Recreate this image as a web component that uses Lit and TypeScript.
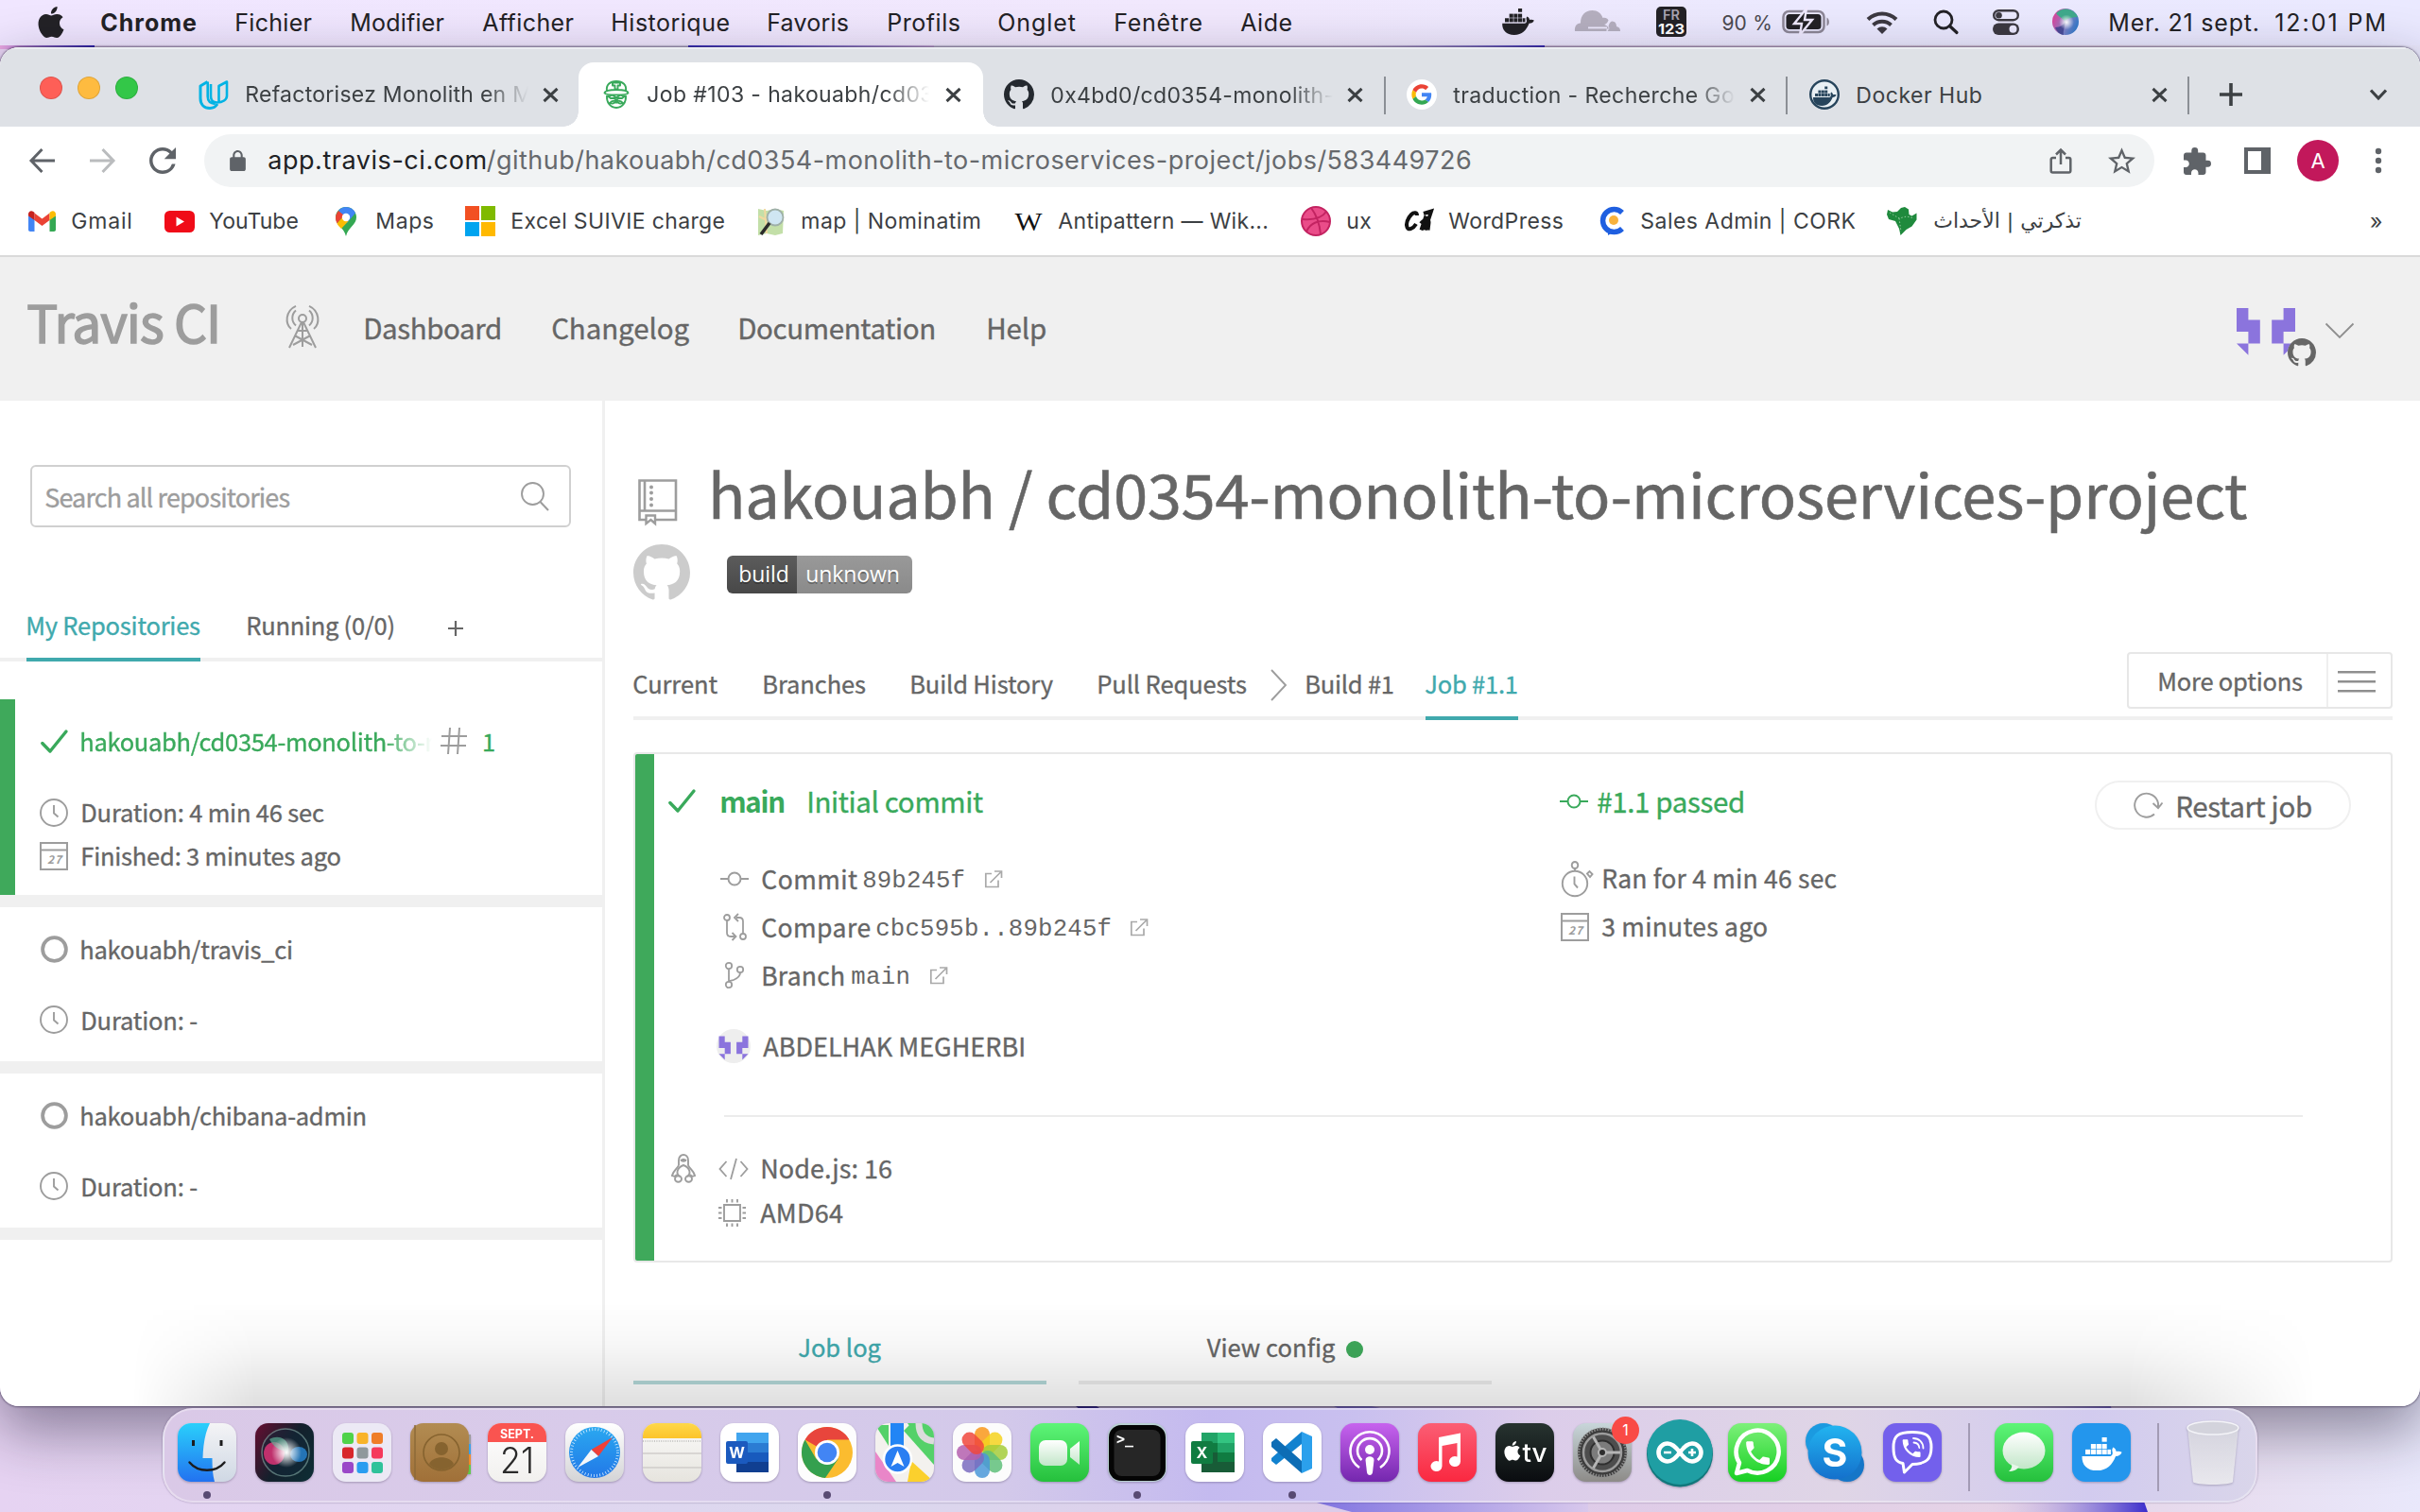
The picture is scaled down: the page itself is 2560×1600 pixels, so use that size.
import { LitElement, html, svg, css, unsafeCSS } from "lit";
import { customElement, property } from "lit/decorators.js";

/* Grid tracks whose items begin at the given x offsets. */
const track = (...xs: number[]) => {
  const steps = xs.slice(1).map((x, i) => `${x - xs[i]}px`).join(" ");
  return unsafeCSS(
    `display:grid;align-items:center;box-sizing:border-box;padding-left:${xs[0]}px;grid-template-columns:${steps} 1fr;`
  );
};

const ico = (w: number, h: number, box: string, body: unknown) =>
  html`<svg class="ico" width=${w} height=${h} viewBox=${box} fill="none" preserveAspectRatio="xMidYMid meet">${body}</svg>`;

const base = css`
  :host { display: block; }
  * { box-sizing: border-box; }
  svg { display: block; flex: none; overflow: visible; }
`;

/* A label tracked so that it fills a given width. */
@customElement("fit-text")
class FitText extends LitElement {
  static styles = css`
    :host { display: inline-block; white-space: pre; width: max-content; margin-left: -0.03em; }
    span { display: inline-block; white-space: pre; }
  `;
  @property({ type: Number }) w = 0;
  render() { return html`<span><slot></slot></span>`; }
  firstUpdated() {
    const span = this.renderRoot.querySelector("span") as HTMLElement;
    const n = (this.textContent ?? "").length;
    if (!this.w || n < 2) return;
    const size = parseFloat(getComputedStyle(this).fontSize);
    const natural = span.getBoundingClientRect().width;
    span.style.letterSpacing = `${((this.w + size * 0.07 - natural) / (n - 1)).toFixed(3)}px`;
  }
}
const t = (text: string, w: number) => html`<fit-text .w=${w}>${text}</fit-text>`;

const GH = "M8 0C3.58 0 0 3.58 0 8c0 3.54 2.29 6.53 5.47 7.59.4.07.55-.17.55-.38 0-.19-.01-.82-.01-1.49-2.01.37-2.53-.49-2.69-.94-.09-.23-.48-.94-.82-1.13-.28-.15-.68-.52-.01-.53.63-.01 1.08.58 1.23.82.72 1.21 1.87.87 2.33.66.07-.52.28-.87.51-1.07-1.78-.2-3.64-.89-3.64-3.95 0-.87.31-1.59.82-2.15-.08-.2-.36-1.02.08-2.12 0 0 .67-.21 2.2.82.64-.18 1.32-.27 2-.27.68 0 1.36.09 2 .27 1.53-1.04 2.2-.82 2.2-.82.44 1.1.16 1.92.08 2.12.51.56.82 1.27.82 2.15 0 3.07-1.87 3.75-3.65 3.95.29.25.54.73.54 1.48 0 1.07-.01 1.93-.01 2.2 0 .21.15.46.55.38A8.013 8.013 0 0016 8c0-4.42-3.58-8-8-8z";
const APPLE = "M12.152 6.896c-.948 0-2.415-1.078-3.96-1.04-2.04.027-3.91 1.183-4.961 3.014-2.117 3.675-.546 9.103 1.519 12.09 1.013 1.454 2.208 3.09 3.792 3.039 1.52-.065 2.09-.987 3.935-.987 1.831 0 2.35.987 3.96.948 1.637-.026 2.676-1.48 3.676-2.948 1.156-1.688 1.636-3.325 1.662-3.415-.039-.013-3.182-1.221-3.22-4.857-.026-3.04 2.48-4.494 2.597-4.559-1.429-2.09-3.623-2.324-4.39-2.376-2-.156-3.675 1.09-4.61 1.09zM15.53 3.83c.843-1.012 1.4-2.427 1.245-3.83-1.207.052-2.662.805-3.532 1.818-.78.896-1.454 2.338-1.273 3.714 1.338.104 2.715-.688 3.559-1.701";
const PHONE = "M6.62 10.79c1.44 2.83 3.76 5.14 6.59 6.59l2.2-2.2c.27-.27.67-.36 1.02-.24 1.12.37 2.33.57 3.57.57.55 0 1 .45 1 1V20c0 .55-.45 1-1 1-9.39 0-17-7.61-17-17 0-.55.45-1 1-1h3.5c.55 0 1 .45 1 1 0 1.25.2 2.45.57 3.57.11.35.03.74-.25 1.02l-2.2 2.2z";

/* Container-ship whale on a 36 x 30 canvas. */
const whale = (fill: string) => svg`
  <g fill=${fill}>
    <rect x="3" y="11" width="4.4" height="4.4"/><rect x="8" y="11" width="4.4" height="4.4"/><rect x="13" y="11" width="4.4" height="4.4"/><rect x="18" y="11" width="4.4" height="4.4"/>
    <rect x="8" y="6" width="4.4" height="4.4"/><rect x="13" y="6" width="4.4" height="4.4"/><rect x="18" y="0" width="4.4" height="4"/>
    <rect x="18" y="6" width="4.4" height="4.4"/><rect x="23" y="11" width="3" height="4.4"/>
    <path d="M0 17h25.5c2-.6 2.6-2.5 1.8-4.700-.3-1.300.2-2.600 1-3.300 1.600.9 2.500 2.300 2.600 3.900 1.600-.4 3.500-.3 5.100.5-.8 2.300-2.700 3.500-5.600 3.600C27.500 24.500 22.500 30 13.500 30 4.500 30-.3 25 0 17z"/>
  </g>`;

/* ------------------------------------------------------------------ menu bar */
@customElement("mac-menubar")
class MacMenubar extends LitElement {
  static styles = [base, css`
    .bar { height: 48px; width: 2560px; color: #232226; font: 25px/46px Inter, "Liberation Sans", sans-serif;
      background: linear-gradient(90deg, #f0e6ff 0%, #f1e8fd 50%, #ebe9fe 75%, #eae9ff 100%);
      ${track(40, 107, 249, 371, 511, 647, 812, 939, 1056, 1179, 1313, 1588, 1666, 1752, 1822, 1885, 1974, 2045, 2108, 2171, 2231, 2407)} }
    .bold { font-weight: 700; }
    .pct { font-size: 21px; color: #4b4950; padding-top: 1px; }
    .ico { align-self: center; margin-top: -2px; }
  `];
  render() {
    return html`<div class="bar">
      ${ico(28, 33, "2.500 0 19 24", svg`<path fill="#232226" d=${APPLE} />`)}
      <div class="bold">${t("Chrome", 100)}</div>
      <div>${t("Fichier", 80)}</div><div>${t("Modifier", 98)}</div><div>${t("Afficher", 95)}</div>
      <div>${t("Historique", 124)}</div><div>${t("Favoris", 85)}</div><div>${t("Profils", 76)}</div>
      <div>${t("Onglet", 81)}</div><div>${t("Fenêtre", 92)}</div><div>${t("Aide", 53)}</div>
      ${ico(36, 28, "0 0 36 30", whale("#232226"))}
      ${ico(48, 24, "0 0 48 24", svg`<path fill="#b5afbf" d="M0 22c-.5-5 1.500-8 6-8.500C6 5 11 0 18.500 0 24 0 28 3 29.500 8c3-.5 5 .5 6 2.500-1.500 4-4.500 4.500-4.500 4.500s4 1 5 4.500H14v2.500z M35.500 17c.5-3 2-5 3.500-5.500 4 0 5 3 5 5.500 3 .5 4 2.500 4 5H34.500l2-3z"/><path d="M14 18.300h20" stroke="#eeebfe" stroke-width="1.600"/><path fill="#b5afbf" d="M0 19.500h33.500V22H0z"/>`)}
      ${ico(32, 32, "0 0 32 32", svg`<rect width="32" height="32" rx="5" fill="#232226"/><text x="16" y="14" text-anchor="middle" font-family="Inter" font-weight="600" font-size="14.500" fill="#a9a4b2">FR</text><text x="16" y="28.800" text-anchor="middle" font-family="Inter" font-weight="700" font-size="15" textLength="28" lengthAdjust="spacingAndGlyphs" fill="#fff">123</text>`)}
      <div class="pct">${t("90 %", 52)}</div>
      ${ico(52, 26, "0 0 52 26", svg`<rect x="1.500" y="2" width="43" height="22" rx="6" stroke="#8d8797" stroke-width="2.500"/><path d="M47.500 8.500c2.800 1 3.500 8 0 9z" fill="#8d8797"/><rect x="4.500" y="5" width="37" height="16" rx="3.500" fill="#232226"/><path d="M26 -1L13 15h8l-2 12 13-16h-8z" fill="#232226" stroke="#efe9fd" stroke-width="2.400"/>`)}
      ${ico(34, 25, "0 0 34 25", svg`<g stroke="#3c3941" stroke-width="4"><path d="M2 9.500a21.500 21.500 0 0 1 30 0"/><path d="M7.500 15.500a13.800 13.800 0 0 1 19 0"/></g><path d="M11.500 19.500a8 8 0 0 1 11 0L17 25z" fill="#3c3941"/>`)}
      ${ico(27, 26, "0 0 27 26", svg`<circle cx="11" cy="11" r="9" stroke="#232226" stroke-width="2.800"/><path d="M17.500 17.500l7.500 7" stroke="#232226" stroke-width="3.200" stroke-linecap="round"/>`)}
      ${ico(28, 27, "0 0 28 27", svg`<rect x="1.200" y="1.200" width="25.600" height="10" rx="5" stroke="#3c3941" stroke-width="2.400"/><circle cx="6.500" cy="6.200" r="3.300" fill="#3c3941"/><rect y="14.500" width="28" height="12.500" rx="6.200" fill="#3c3941"/><circle cx="21.500" cy="20.700" r="4" fill="#ece9fe"/>`)}
      ${ico(28, 28, "0 0 28 28", svg`<defs><linearGradient id="sb" x1="0" y1=".3" x2="1" y2=".7"><stop offset="0" stop-color="#e0409a"/><stop offset=".5" stop-color="#8a83c8"/><stop offset="1" stop-color="#2a78c8"/></linearGradient><radialGradient id="sg"><stop offset="0" stop-color="#fff"/><stop offset="1" stop-color="#fff" stop-opacity="0"/></radialGradient></defs><circle cx="14" cy="14" r="14" fill="url(#sb)"/><path d="M4 5a14 14 0 0 1 23 4c-5 0-10 1-14 4C9 9 6 8 4 5z" fill="#3fa98c"/><path d="M3 20c5 0 9-3 11-6-1 6-3 11-2 14-4-.5-7-3-9-8z" fill="#3a3f8c" opacity=".8"/><circle cx="15" cy="14.500" r="8" fill="url(#sg)"/>`)}
      <div>${t("Mer. 21 sept.", 158)}</div><div>${t("12:01 PM", 116)}</div>
    </div>`;
  }
}

/* -------------------------------------------------------------- browser frame */
const closeX = ico(17, 15, "0 0 17 15", svg`<path d="M1.500 .8l14 13.400M15.500 .8l-14 13.400" stroke="#3c4043" stroke-width="3"/>`);

@customElement("browser-chrome")
class BrowserChrome extends LitElement {
  static styles = [base, css`
    .strip { height: 84px; background: #dee1e6; box-shadow: inset 0 2px #eceef2; position: relative; color: #3c4043;
      font: 23px/36px Inter, "Liberation Sans", sans-serif; display: flex; padding-top: 16px; }
    .lights { width: 194px; display: flex; gap: 16px; padding: 15px 0 0 42px; }
    .light { width: 24px; height: 24px; border-radius: 50%; border: 1px solid rgba(0,0,0,.12); }
    .red { background: #fe5f57; } .amber { background: #febb40; } .green { background: #33c748; }
    .tab { height: 68px; display: flex; align-items: center; position: relative; padding-bottom: 0; }
    .t1 { width: 418px; padding-left: 16px; } .t2 { width: 428px; padding-left: 26px; background: #fff; border-radius: 16px 16px 0 0; }
    .t3 { width: 426px; padding-left: 22px; border-right: 2px solid #8b8f95; }
    .t4 { width: 425px; padding-left: 22px; border-right: 2px solid #8b8f95; }
    .t5 { width: 425px; padding-left: 23px; border-right: 2px solid #8b8f95; }
    .sep { height: 40px; margin-top: 15px; }
    .sep .ico { margin-top: -2px; }
    .t2::before, .t2::after { content: ""; position: absolute; bottom: 0; width: 16px; height: 16px; }
    .t2::before { left: -16px; background: radial-gradient(circle at 0 0, transparent 15.500px, #fff 16px); }
    .t2::after { right: -16px; background: radial-gradient(circle at 100% 0, transparent 15.500px, #fff 16px); }
    .name { width: 300px; overflow: hidden; margin-left: 16px; padding-left: 2px; margin-right: 15px; margin-top: -1px; }
    .fade { -webkit-mask-image: linear-gradient(90deg, #000 85%, transparent 100%); mask-image: linear-gradient(90deg, #000 85%, transparent 100%); }
    .t1 .name { width: 301px; margin-right: 15px; }
    .t2 .name { width: 300px; margin-left: 17px; margin-right: 17px; }
    .t5 .name { width: 299px; }
    .extra { display: flex; align-items: center; height: 68px; flex: 1; justify-content: space-between; padding: 0 35px 0 32px; }
    .tools { height: 72px; background: #fff; ${track(31, 95, 158, 216, 2310, 2374, 2430, 2512)} align-content: center; }
    .omni { width: 2063px; height: 56px; border-radius: 28px; background: #f1f3f4; font: 27px/56px Inter, "Liberation Sans", sans-serif; color: #66696d;
      ${track(27, 68, 1952, 2014)} }
    .dark { color: #202124; }
    .me { width: 44px; height: 44px; border-radius: 50%; background: #c2185b; color: #fff; font: 22px/44px Inter, sans-serif; text-align: center; }
    .marks { height: 66px; background: #fff; border-bottom: 2px solid #dadada; color: #3c4043; font: 23px/56px Inter, "Liberation Sans", sans-serif; padding-bottom: 9px;
      ${track(30, 76, 174, 222, 355, 398, 492, 541, 801, 848, 1073, 1120, 1376, 1425, 1486, 1533, 1691, 1736, 1996, 2045, 2507)} }
    .ar { font-family: "DejaVu Sans", "Noto Sans", sans-serif; font-size: 22px; direction: rtl; width: 157px; white-space: nowrap; }
  `];
  render() {
    return html`
    <div class="strip">
      <div class="lights"><div class="light red"></div><div class="light amber"></div><div class="light green"></div></div>
      <div class="tab t1">
        ${ico(32, 31, "0 0 32 31", svg`<path d="M9.500 1.500L2 6v13c0 6.500 4 10.500 10 10.500 3.500 0 6-1.500 8-4.500" stroke="#02b3e4" stroke-width="3" stroke-linejoin="round"/><path d="M9.700 1.500v15.500c0 4.500 3 7.500 8 8M13 4v13c0 4 2.500 6.500 6.500 6.500 6 0 10.500-3 10.500-7V1.500l-8.500 4.500v17" stroke="#02b3e4" stroke-width="2.600" stroke-linejoin="round"/>`)}
        <div class="name fade">${t("Refactorisez Monolith en M", 302)}</div>${closeX}
      </div>
      <div class="tab t2">
        ${ico(28, 30, "0 0 28 30", svg`<g stroke="#39a95b" stroke-width="1.900" stroke-linejoin="round"><path d="M4 11C3 5 7 1 14 1s11 4 10 10M1.500 13.500c0-2.500 5-3.500 12.500-3.500s12.500 1 12.500 3.500c-2 2.500-23 2.500-25 0zM10 2.500h8v3h-2.500v4h-3v-4H10zM4 16c-.5 7 3 12.500 10 13 7-.5 10.500-6 10-13M5.500 17l4-1.500 4 2.500h1l4-2.500 4 1.500-2.500 2h-4L14 21l-2-2H8zM7 24c2-2.500 5-2.500 7-1.500 2-1 5-1 7 1.500-2 1-4 .5-5-.5h-4c-1 1-3 1.500-5 .5z"/></g>`)}
        <div class="name fade">${t("Job #103 - hakouabh/cd035", 316)}</div>${closeX}
      </div>
      <div class="tab t3 sep">
        ${ico(32, 32, "0 0 16 16", svg`<path fill="#24292f" d=${GH} />`)}
        <div class="name fade">${t("0x4bd0/cd0354-monolith-t", 306)}</div>${closeX}
      </div>
      <div class="tab t4 sep">
        ${ico(32, 32, "-12 -12 72 72", svg`<circle cx="24" cy="24" r="36" fill="#fff"/><path fill="#EA4335" d="M24 9.500c3.540 0 6.710 1.220 9.210 3.600l6.850-6.850C35.900 2.380 30.470 0 24 0 14.620 0 6.510 5.380 2.560 13.220l7.980 6.190C12.430 13.720 17.740 9.500 24 9.500z"/><path fill="#4285F4" d="M46.980 24.550c0-1.570-.15-3.090-.38-4.550H24v9.020h12.940c-.58 2.960-2.260 5.480-4.780 7.180l7.730 6c4.510-4.180 7.090-10.360 7.090-17.650z"/><path fill="#FBBC05" d="M10.530 28.590c-.48-1.450-.76-2.990-.76-4.590s.27-3.140.76-4.590l-7.980-6.190C.92 16.460 0 20.120 0 24c0 3.880.92 7.540 2.560 10.780l7.970-6.190z"/><path fill="#34A853" d="M24 48c6.480 0 11.930-2.130 15.890-5.810l-7.730-6c-2.150 1.450-4.920 2.300-8.160 2.300-6.260 0-11.570-4.220-13.470-9.910l-7.980 6.190C6.510 42.620 14.620 48 24 48z"/>`)}
        <div class="name fade">${t("traduction - Recherche Goo", 310)}</div>${closeX}
      </div>
      <div class="tab t5 sep">
        ${ico(32, 32, "0 0 32 32", svg`<circle cx="16" cy="16" r="14.800" fill="#e9f0f4" stroke="#27455c" stroke-width="2.400"/><g transform="translate(4 7.500) scale(.68)">${whale("#27455c")}</g>`)}
        <div class="name">${t("Docker Hub", 132)}</div>${closeX}
      </div>
      <div class="extra">
        ${ico(24, 24, "0 0 24 24", svg`<path d="M12 0v24M0 12h24" stroke="#3c4043" stroke-width="3.600"/>`)}
        ${ico(18, 12, "0 0 18 12", svg`<path d="M1 1.500l8 8.500 8-8.500" stroke="#3c4043" stroke-width="3.200"/>`)}
      </div>
    </div>
    <div class="tools">
      ${ico(27, 26, "0 0 27 26", svg`<path d="M13.500 1L2 13l11.500 12M2 13h25" stroke="#5f6368" stroke-width="3"/>`)}
      ${ico(27, 26, "0 0 27 26", svg`<path d="M13.500 1L25 13 13.500 25M25 13H0" stroke="#babcbe" stroke-width="3"/>`)}
      ${ico(28, 28, "4 4 16 16", svg`<path fill="#5f6368" d="M17.650 6.350A7.958 7.958 0 0 0 12 4c-4.420 0-7.990 3.580-7.990 8s3.570 8 7.990 8c3.730 0 6.840-2.550 7.730-6h-2.080A5.990 5.990 0 0 1 12 18c-3.310 0-6-2.690-6-6s2.690-6 6-6c1.660 0 3.140.69 4.220 1.780L13 11h7V4l-2.350 2.350z"/>`)}
      <div class="omni">
        ${ico(17, 22, "4 1 16 21", svg`<path fill="#5f6368" fill-rule="evenodd" d="M18 8h-1V6c0-2.760-2.240-5-5-5S7 3.240 7 6v2H6c-1.100 0-2 .9-2 2v10c0 1.100.9 2 2 2h12c1.100 0 2-.9 2-2V10c0-1.100-.9-2-2-2zM9 8V6c0-1.660 1.340-3 3-3s3 1.340 3 3v2H9z"/>`)}
        <div><fit-text class="dark" .w=${230}>app.travis-ci.com</fit-text>${t("/github/hakouabh/cd0354-monolith-to-microservices-project/jobs/583449726", 1040)}</div>
        ${ico(24, 28, "0 0 24 28", svg`<path d="M7 11H3.500c-1 0-1.800.6-1.800 1.700v12c0 1 .8 1.800 1.800 1.800h17c1 0 1.800-.8 1.800-1.800v-12c0-1.100-.8-1.700-1.800-1.700H17M12 18V2.500M7 7.500L12 2.500l5 5" stroke="#5f6368" stroke-width="2.500"/>`)}
        ${ico(29, 28, "2 2 20 19", svg`<path fill="#5f6368" fill-rule="evenodd" d="M22 9.240l-7.190-.62L12 2 9.190 8.630 2 9.240l5.460 4.730L5.820 21 12 17.270 18.180 21l-1.630-7.030L22 9.240zM12 15.400l-3.760 2.270 1-4.280-3.320-2.880 4.380-.38L12 6.100l1.710 4.040 4.380.38-3.320 2.880 1 4.280L12 15.400z"/>`)}
      </div>
      ${ico(29, 29, "2 1 21 21", svg`<path fill="#5f6368" d="M20.500 11H19V7c0-1.100-.9-2-2-2h-4V3.500a2.500 2.500 0 0 0-5 0V5H4c-1.100 0-1.990.9-1.990 2v3.800H3.500c1.490 0 2.700 1.210 2.700 2.700s-1.210 2.700-2.700 2.700H2V20c0 1.100.9 2 2 2h3.800v-1.500c0-1.490 1.210-2.700 2.700-2.700 1.490 0 2.700 1.210 2.700 2.700V22H17c1.100 0 2-.9 2-2v-4h1.500a2.500 2.500 0 0 0 0-5z"/>`)}
      ${ico(28, 28, "0 0 28 28", svg`<path fill="#5f6368" fill-rule="evenodd" d="M0 0h28v28H0zM4 4v20h14V4z"/>`)}
      <div class="me">A</div>
      ${ico(8, 28, "0 0 8 28", svg`<g fill="#5f6368"><circle cx="4" cy="4" r="3.200"/><circle cx="4" cy="14" r="3.200"/><circle cx="4" cy="24" r="3.200"/></g>`)}
    </div>
    <div class="marks">
      ${ico(29, 22, "0 0 29 22", svg`<path fill="#4285f4" d="M0 5v15c0 1.200.8 2 2 2h4.500V9z"/><path fill="#34a853" d="M29 5v15c0 1.200-.8 2-2 2h-4.500V9z"/><path fill="#ea4335" d="M6.500 2.500l8 6 8-6V10l-8 6-8-6z"/><path fill="#c5221f" d="M0 3.500C0 .5 3 -.8 5.300.9L6.500 2v8L0 5.500z"/><path fill="#fbbc04" d="M29 3.500c0-3-3-4.300-5.300-2.600L22.500 2v8L29 5.500z"/>`)}
      <div>${t("Gmail", 63)}</div>
      ${ico(32, 23, "0 0 32 23", svg`<rect width="32" height="23" rx="5.500" fill="#f00c18"/><path fill="#fff" d="M12.500 6.500l8.500 5-8.500 5z"/>`)}
      <div>${t("YouTube", 93)}</div>
      ${ico(22, 31, "0 0 22 31", svg`<path d="M11 0a11 11 0 0 1 11 11c0 8-8.500 10-11 20C8.500 21 0 19 0 11A11 11 0 0 1 11 0z" fill="#34a853"/><path d="M11 0a11 11 0 0 1 10 6.500L12 17 3 4C5 1.500 8 0 11 0z" fill="#4285f4"/><path d="M3 4l6 5-7.500 8.500C-.5 13-.8 8.500 3 4z" fill="#ea4335"/><path d="M1.500 17.500L9 9l4.500 6L6 23c-2-2-3.500-3.500-4.500-5.500z" fill="#fbbc04"/><circle cx="11" cy="11" r="4.200" fill="#fff"/>`)}
      <div>${t("Maps", 60)}</div>
      ${ico(32, 32, "0 0 32 32", svg`<path fill="#f25022" d="M0 0h15v15H0z"/><path fill="#7fba00" d="M17 0h15v15H17z"/><path fill="#00a4ef" d="M0 17h15v15H0z"/><path fill="#ffb900" d="M17 17h15v15H17z"/>`)}
      <div>${t("Excel SUIVIE charge", 225)}</div>
      ${ico(30, 31, "0 0 30 31", svg`<path d="M1 2l9 2 9-2 9 2-1 24-8 2-9-2-9 2z" fill="#c3dfa8"/><path d="M2 10l12 6 12-3M8 2l2 26" stroke="#f2d9a0" stroke-width="2"/><circle cx="19" cy="11" r="8.500" fill="#cfe6f2" stroke="#9fb0a8" stroke-width="1.800"/><path d="M13 17L4 29" stroke="#2b2b2b" stroke-width="3.600"/>`)}
      <div>${t("map | Nominatim", 189)}</div>
      ${ico(30, 30, "0 0 30 30", svg`<text x="15" y="24.500" text-anchor="middle" font-family="Liberation Serif" font-size="27" textLength="29" lengthAdjust="spacingAndGlyphs" fill="#111">W</text>`)}
      <div>${t("Antipattern — Wik...", 221)}</div>
      ${ico(32, 32, "0 0 32 32", svg`<circle cx="16" cy="16" r="15" fill="#ea4c89" stroke="#c32361" stroke-width="2"/><path d="M11 2c6 8 9 17 10 28M2 14c11 1 20-1 25-8M6 27c4-9 13-13 25-10" stroke="#c32361" stroke-width="2"/>`)}
      <div>${t("ux", 25)}</div>
      ${ico(30, 22, "0 0 30 22", svg`<path d="M13 5c0-3-3-4-6-1-4 4-6 10-4.500 13.500S9 19 12 14M17.500 20.500l5-15M20 3l8-2.500-6.500 20M17 13.500c4-5 9-5 8.500-1l-1 8" stroke="#111" stroke-width="4"/>`)}
      <div>${t("WordPress", 120)}</div>
      ${ico(30, 30, "0 0 30 30", svg`<path d="M25 6A12 12 0 1 0 25 23" stroke="#1f5fe0" stroke-width="5.500"/><path d="M10 24v6l7-4z" fill="#1f5fe0"/><circle cx="16" cy="14" r="5" fill="#f8b23c"/>`)}
      <div>${t("Sales Admin | CORK", 226)}</div>
      ${ico(32, 30, "0 0 32 30", svg`<path fill="#1f8a3d" d="M1 3l5 2.500 5-.5 4-4 4-1 4 2.500.5 5.500 3 1.500 5-3v7l-5 7-6 3.500-6 6-1.500-7-4-8-7-2-2-5z"/><path d="M3 6l10 6 8-2 8 2M13 12l2 14" stroke="#9fd0a8" stroke-width=".9" stroke-dasharray="1.500 2"/>`)}
      <div class="ar">تذكرتي | الأحداث</div>
      <div>»</div>
    </div>`;
  }
}

/* ------------------------------------------------------------------- CI page */
const G = "#9d9d9d";
const check = ico(29, 25, "0 0 29 25", svg`<path d="M1.800 14.500l8.200 8.500L27 2" stroke="#39a95b" stroke-width="3.400" stroke-linecap="round" stroke-linejoin="round"/>`);
const clock = ico(30, 30, "0 0 30 30", svg`<circle cx="15" cy="15" r="14" stroke=${G} stroke-width="1.900"/><path d="M15 7v8.500l4.500 4" stroke=${G} stroke-width="1.900"/>`);
const calendar = ico(30, 30, "0 0 30 30", svg`<path d="M1 1h28v28H1zM1 8.500h28" stroke=${G} stroke-width="2"/><text x="15.500" y="23" text-anchor="middle" font-family="Noto Sans CJK SC" font-style="italic" font-weight="700" font-size="12" textLength="15" fill=${G}>27</text>`);
const ring = ico(29, 29, "0 0 29 29", svg`<circle cx="14.500" cy="14.500" r="12.400" stroke="#9d9d9d" stroke-width="3.800"/>`);
const ext = ico(19, 19, "0 0 19 19", svg`<path d="M7 3.500H.8V17.500H14V10.500M5.500 13L16.500 2M10 1H17.500V8" stroke="#a9a9a9" stroke-width="1.700"/>`);
const commit = (c: string, w: number) => ico(w, 16, "0 0 30 16", svg`<circle cx="15" cy="8" r="6.500" stroke=${c} stroke-width="2"/><path d="M0 8h8.500M21.500 8H30" stroke=${c} stroke-width="2"/>`);
const identicon = svg`<path fill="#8b74dd" d="M0 0h12.400v12.400h12.400v25H12.400V25H0zM62 0H49.600v12.400H37.200v25h12.400V25H62zM0 37.400h12.400v12.400zM62 37.400H49.600v12.400z"/>`;

@customElement("ci-page")
class CiPage extends LitElement {
  static styles = [base, css`
    :host { color: #666; font-family: "Noto Sans CJK SC", "Source Sans Pro", sans-serif; font-size: 25.500px; -webkit-text-stroke: .35px; }
    .head { height: 152px; background: #f0f0f0; ${track(30, 303, 385, 584, 781, 1044, 2361, 2460)} font-size: 29.500px; line-height: 40px; padding-bottom: 4px; }
    .head > .ico:last-child { margin-top: 8px; }
    .logo { font-size: 55px; line-height: 60px; color: #9d9d9d; -webkit-text-stroke: 1.500px #9d9d9d; margin-top: -14px; }
    .who { position: relative; width: 90px; height: 72px; }
    .who .badge { position: absolute; left: 59px; top: 48px; background: #f0f0f0; border-radius: 50%; }
    .cols { display: flex; height: 1064px; }
    .side { width: 640px; border-right: 3px solid #f0f0f0; flex: none; }
    .search { margin: 68px 0 0 32px; width: 572px; height: 66px; border: 2px solid #d0d0d0; border-radius: 6px; font-size: 27px; line-height: 63px; color: #9d9d9d; ${track(14, 517)} }
    .stabs { margin-top: 68px; height: 74px; box-shadow: inset 0 -4px #f0f0f0; line-height: 70px; ${track(28, 261, 474)} }
    .stabs .ico { margin-top: 4px; }
    .stabs > div:not(.on), .tabs > div:not(.on):not(.more) { padding-bottom: 4px; }
    .on { height: 74px; color: #40a9ad; border-bottom: 4px solid #40a9ad; width: max-content; }
    .repo { height: 176px; padding-top: 24px; border-bottom: 13px solid #f0f0f0; }
    .passed { margin-top: 40px; height: 220px; background: linear-gradient(#3fa95b, #3fa95b) 0 0 / 16px 100% no-repeat; background-clip: padding-box; background-origin: padding-box; }
    .passed .slug, .num { color: #39a95b; }
    .line { height: 46px; line-height: 46px; ${track(42, 86)} }
    .passed .line { line-height: 44px; }
    .passed .line .ico { margin-top: 1px; }
    .slugline { height: 40px; line-height: 40px; margin-bottom: 32px; ${track(43, 85, 466, 510)} }
    .clip { width: 374px; overflow: hidden; padding-left: 2px; margin-left: -2px; -webkit-mask-image: linear-gradient(90deg, #000 86%, transparent 100%); mask-image: linear-gradient(90deg, #000 86%, transparent 100%); }
    .main { padding: 47px 30px 0 30px; flex: 1; }
    .title { height: 100px; line-height: 99px; font-size: 65px; -webkit-text-stroke: .6px; ${track(5, 81)} }
    .title .ico { margin-top: 21px; }
    .meta { height: 60px; margin-top: 5px; ${track(0, 99)} }
    .shield { margin-top: 4px; width: 196px; height: 40px; border-radius: 6px; overflow: hidden; display: flex; font: 23px/38px "Open Sans", "Noto Sans", sans-serif; color: #fff; text-shadow: 0 2px rgba(0,0,0,.3); -webkit-text-stroke: 0; }
    .shield div { background: linear-gradient(#999, #8a8a8a); flex: 1; padding-left: 10px; }
    .shield .k { background: linear-gradient(#5c5c5c, #484848); flex: none; width: 74px; padding-left: 13px; }
    .tabs { margin-top: 52px; height: 74px; box-shadow: inset 0 -4px #f0f0f0; line-height: 70px; ${track(0, 137, 293, 491, 674, 711, 838, 1580)} }
    .more { height: 60px; width: 281px; border: 2px solid #e7e7e7; border-radius: 4px; line-height: 55px; display: flex; margin-top: -10px; }
    .more div { width: 211px; padding-left: 31px; border-right: 2px solid #efefef; }
    .more .ico { margin: 17px 0 0 10px; }
    .card { margin-top: 34px; height: 540px; border: 2px solid #e8e8e8; border-radius: 4px; display: flex; }
    .bar { width: 20px; background: #3fa95b; border-radius: 2px 0 0 2px; }
    .body { flex: 1; padding-top: 25px; }
    .top { display: flex; }
    .left { width: 958px; } .right { width: 566px; }
    .green { color: #39a95b; font-size: 29.500px; height: 49px; line-height: 49px; margin-bottom: 31px; }
    .bold { font-weight: 700; -webkit-text-stroke: 0; }
    .h1 { ${track(15, 70, 162)} }
    .h2 { ${track(0, 40)} }
    .fact { height: 51px; line-height: 49px; font-size: 26.500px; }
    .commit { ${track(70, 114, 221, 350)} }
    .compare { ${track(73, 114, 235, 504)} }
    .branch { ${track(74, 114, 209, 292)} }
    .time { ${track(1, 45)} }
    .fact .ico { margin-top: 2px; }
    .mono { font-family: "Liberation Mono", monospace; font-size: 25.700px; padding-top: 8px; line-height: 44px; -webkit-text-stroke: 0; }
    .author { height: 49px; line-height: 49px; font-size: 27px; margin-top: 26px; ${track(66, 116)} }
    .author .face { background: #eee; border-radius: 50%; }
    .restart { margin-top: 3px; width: 271px; height: 52px; border: 2px solid #f0f0f0; border-radius: 26px; font-size: 29.500px; line-height: 44px; ${track(39, 84)} }
    .rule { margin: 49px 0 30px 74px; width: 1670px; height: 2px; background: #ececec; }
    .env { height: 47px; line-height: 47px; font-size: 27px; ${track(18, 68, 113)} }
    .env .ico { margin-top: 2px; }
    .logs { margin-top: 53px; display: flex; gap: 34px; }
    .log { width: 437px; height: 76px; line-height: 72px; display: flex; justify-content: center; border-bottom: 4px solid #ececec; }
    .log.sel { color: #40a9ad; border-color: #b4d8d8; }
    .dot { width: 18px; height: 18px; border-radius: 50%; background: #3fa95b; margin: 30px 0 0 11px; }
  `];
  repo(name: string, w: number) {
    return html`<div class="repo"><div class="slugline">${ring}<div>${t(name, w)}</div></div>
      <div class="line">${clock}<div>${t("Duration: -", 122)}</div></div></div>`;
  }
  render() {
    return html`
    <div class="head">
      <div class="logo">${t("Travis CI", 202)}</div>
      ${ico(34, 46, "0 0 34 46", svg`<g stroke=${G} stroke-width="2"><circle cx="17" cy="14" r="4"/><path d="M16 18L3 45M18 18l13 27M17 18v26M12 27h10M9.500 32.500L27 42M24.500 32.500L7 42"/><path d="M10 5.500a10.500 10.500 0 0 0 0 16M24 5.500a10.500 10.500 0 0 1 0 16M10 .8C-1.500 6-1.500 20 5 25M24 .8C35.500 6 35.500 20 29 25"/></g>`)}
      <div>${t("Dashboard", 145)}</div><div>${t("Changelog", 144)}</div><div>${t("Documentation", 208)}</div><div>${t("Help", 62)}</div>
      <div class="who">
        <svg width="72" height="72" viewBox="-5 -16 72 72">${identicon}</svg>
        <svg class="badge" width="30" height="30" viewBox="0 0 16 16"><path fill="#666" d=${GH} /></svg>
      </div>
      ${ico(30, 16, "0 0 30 16", svg`<path d="M.5 .5L15 15 29.500 .5" stroke="#8f8f8f" stroke-width="1.800"/>`)}
    </div>
    <div class="cols">
      <div class="side">
        <div class="search">${t("Search all repositories", 258)}
          ${ico(30, 31, "0 0 30 31", svg`<circle cx="12.500" cy="12.500" r="11.500" stroke="#9d9d9d" stroke-width="1.900"/><path d="M20.500 21L29 30" stroke="#9d9d9d" stroke-width="2"/>`)}</div>
        <div class="stabs"><div class="on">${t("My Repositories", 183)}</div><div>${t("Running (0/0)", 156)}</div>
          ${ico(16, 16, "0 0 16 16", svg`<path d="M8 0v16M0 8h16" stroke="#666" stroke-width="2.200"/>`)}</div>
        <div class="repo passed">
          <div class="slugline">${check}<div class="clip slug">${t("hakouabh/cd0354-monolith-to-m", 387)}</div>
            ${ico(28, 28, "0 0 28 28", svg`<path d="M10 0L8 28M20 0l-2 28M1 9h27M0 19h27" stroke=${G} stroke-width="2"/>`)}<div class="num">1</div></div>
          <div class="line">${clock}<div>${t("Duration: 4 min 46 sec", 256)}</div></div>
          <div class="line">${calendar}<div>${t("Finished: 3 minutes ago", 274)}</div></div>
        </div>
        ${this.repo("hakouabh/travis_ci", 224)}
        ${this.repo("hakouabh/chibana-admin", 302)}
      </div>
      <div class="main">
        <div class="title">
          ${ico(42, 49, "0 0 42 49", svg`<g stroke=${G} stroke-width="2.600"><path d="M8 43H1.500V1.500H40V43H19M7 1.500V33M1.500 33.500H40"/><path d="M8.500 38.500h9.500v8.500l-4.500-4-5 4z" stroke-width="2.400"/></g><g fill=${G}><circle cx="14" cy="8.500" r="2"/><circle cx="14" cy="14.500" r="2"/><circle cx="14" cy="21" r="2"/><circle cx="14" cy="27.500" r="2"/></g>`)}
          <div>${t("hakouabh / cd0354-monolith-to-microservices-project", 1624)}</div>
        </div>
        <div class="meta">${ico(60, 60, "0 0 16 16", svg`<path fill="#ccc" d=${GH} />`)}
          <div class="shield"><div class="k">${t("build", 52)}</div><div>${t("unknown", 98)}</div></div></div>
        <div class="tabs">
          <div>${t("Current", 88)}</div><div>${t("Branches", 108)}</div><div>${t("Build History", 150)}</div><div>${t("Pull Requests", 157)}</div>
          ${ico(18, 34, "0 0 18 34", svg`<path d="M1 1l15 16L1 33" stroke="#9d9d9d" stroke-width="1.900"/>`)}
          <div>${t("Build #1", 93)}</div><div class="on">${t("Job #1.1", 97)}</div>
          <div class="more"><div>${t("More options", 152)}</div>
            ${ico(40, 24, "0 0 40 24", svg`<path d="M0 2.200h40M0 12.200h40M0 22.200h40" stroke="#8f8f8f" stroke-width="2.600"/>`)}</div>
        </div>
        <div class="card">
          <div class="bar"></div>
          <div class="body">
            <div class="top">
              <div class="left">
                <div class="green h1">${check}<div class="bold">${t("main", 68)}</div><div>${t("Initial commit", 185)}</div></div>
                <div class="fact commit">${commit(G, 30)}<div>${t("Commit", 100)}</div><div class="mono">${t("89b245f", 107)}</div>${ext}</div>
                <div class="fact compare">
                  ${ico(25, 28, "0 0 25 28", svg`<g stroke=${G} stroke-width="1.800"><circle cx="4" cy="4" r="3"/><circle cx="21" cy="24" r="3"/><path d="M4 7v13c0 3 1 4 4 4h4M9.500 20l4 4-4 4M21 21V8c0-3-1-4-4-4h-3M16 0l-4 4 4 4"/></g>`)}
                  <div>${t("Compare", 114)}</div><div class="mono">${t("cbc595b..89b245f", 248)}</div>${ext}</div>
                <div class="fact branch">
                  ${ico(22, 28, "0 0 22 28", svg`<g stroke=${G} stroke-width="1.800"><circle cx="5" cy="4" r="3.200"/><circle cx="5" cy="24" r="3.200"/><circle cx="17" cy="8" r="3.200"/><path d="M5 7.200v13.600M17 11.200c0 5-6 8-12 9"/></g>`)}
                  <div>${t("Branch", 87)}</div><div class="mono">${t("main", 61)}</div>${ext}</div>
                <div class="author"><svg class="face" width="36" height="36" viewBox="-5 -15 72 72">${identicon}</svg><div>${t("ABDELHAK MEGHERBI", 276)}</div></div>
              </div>
              <div class="right">
                <div class="green h2">${commit("#39a95b", 30)}<div>${t("#1.1 passed", 155)}</div></div>
                <div class="fact time">
                  ${ico(34, 38, "0 0 34 38", svg`<g stroke=${G} stroke-width="1.900"><circle cx="15" cy="24" r="13.200"/><ellipse cx="15" cy="4.500" rx="3.300" ry="3.500"/><path d="M15 8v3M14.500 16.500v8l3.500 4M28 13.500l2.500-2.500 3 3-2.500 3z"/></g>`)}
                  <div>${t("Ran for 4 min 46 sec", 247)}</div></div>
                <div class="fact time">${calendar}<div>${t("3 minutes ago", 174)}</div></div>
              </div>
              <div class="restart">
                ${ico(31, 28, "0 0 31 28", svg`<path d="M22 23.500A12.500 12.500 0 1 1 26 12v5M20.500 12l5.500 5 4.500-5.500" stroke="#9d9d9d" stroke-width="1.900"/>`)}
                <div>${t("Restart job", 143)}</div></div>
            </div>
            <div class="rule"></div>
            <div class="env">
              ${ico(26, 31, "0 0 26 31", svg`<g stroke=${G} stroke-width="1.900"><path d="M8 12V7c0-8 10-8 10 0v5c1 3 6 6 7 11l-3 1-2-2M8 12c-1 3-6 6-7 11l3 1 2-2"/><path d="M9 24c-4-3-3.500-9 4-12 7.500 3 8 9 4 12"/><ellipse cx="7.500" cy="26.500" rx="3.500" ry="3.300"/><ellipse cx="18.500" cy="26.500" rx="3.500" ry="3.300"/></g><path d="M9.500 6.500c2-2 5-2 7 0-.5 3-6.500 3-7 0z" fill=${G} />`)}
              ${ico(32, 22, "0 0 32 22", svg`<path d="M8.500 3L1.500 11l7 8M23.500 3l7 8-7 8M19 0l-6 22" stroke=${G} stroke-width="1.800"/>`)}
              <div>${t("Node.js: 16", 138)}</div></div>
            <div class="env"><span></span>
              ${ico(29, 29, "0 0 29 29", svg`<path d="M6 6h17v17H6z" stroke=${G} stroke-width="1.900"/><path d="M9 0v3.500M14.500 0v3.500M20 0v3.500M9 25.500V29M14.500 25.500V29M20 25.500V29M0 9h3.500M0 14.500h3.500M0 20h3.500M25.500 9H29M25.500 14.500H29M25.500 20H29" stroke=${G} stroke-width="1.900"/>`)}
              <div>${t("AMD64", 86)}</div></div>
          </div>
        </div>
        <div class="logs"><div class="log sel">${t("Job log", 86)}</div><div class="log">${t("View config", 134)}<div class="dot"></div></div></div>
      </div>
    </div>`;
  }
}

/* ---------------------------------------------------------------------- dock */
const tile = (fill: string) => svg`<rect width="62" height="62" rx="14" fill=${fill} />`;
const grad = (id: string, a: string, b: string) =>
  svg`<linearGradient id=${id} x1="0" y1="0" x2="0" y2="1"><stop offset="0" stop-color=${a} /><stop offset="1" stop-color=${b} /></linearGradient>`;
const pads = ["#4fd24a", "#f8b32a", "#ef7d28", "#d8262c", "#8f989c", "#f53a5c", "#9a47c8", "#2a9df0", "#2fc29a"];
const petals = ["#f9981b", "#f4d21f", "#a5cd39", "#5fbf7a", "#4a98d8", "#7a6cc0", "#b45fae", "#f0483c"];

const icons: Record<string, unknown> = {
  finder: svg`${tile("url(#g-fw)")}<path d="M34 0H14A14 14 0 0 0 0 14v34a14 14 0 0 0 14 14h25c-2-7-2.500-15-2.500-25H26.500C27 22 29 10 34 0z" fill="url(#g-fb)"/><path d="M16.500 18v6M46 18v6" stroke="#1c1c1e" stroke-width="3"/><path d="M12.500 41.500c9 11 28 11 37 0" stroke="#1c1c1e" stroke-width="2.400" stroke-linecap="round"/>`,
  siri: svg`${tile("url(#g-siri)")}<circle cx="32" cy="31" r="25" stroke="#8fb8b0" stroke-opacity=".55" stroke-width="1.500" fill="#12283a" fill-opacity=".5"/><ellipse cx="20" cy="32" rx="11" ry="12" fill="#e8357a" opacity=".8"/><ellipse cx="46" cy="33" rx="9" ry="8" fill="#2b8fe0" opacity=".75"/><path d="M15 17c10-6 22 0 20 13-8 0-16-5-20-13z" fill="#5fb79a" opacity=".65"/><circle cx="33" cy="31" r="16" fill="url(#g-glow)"/>`,
  launchpad: svg`${tile("#ece9f5")}${pads.map((c, i) => svg`<rect x=${10 + (i % 3) * 15.5} y=${10 + Math.floor(i / 3) * 15.5} width="12" height="12" rx="3" fill=${c} />`)}`,
  contacts: svg`<path d="M58 12h6v10h-6z" fill="#9a9a9a"/><path d="M58 22h6v11h-6z" fill="#3aa0e8"/><path d="M58 33h6v11h-6z" fill="#f08a28"/><path d="M58 44h6v10h-6z" fill="#5fc84a"/>${tile("url(#g-con)")}<path d="M5 2v58" stroke="#8d6a38" stroke-width="1.500"/><circle cx="33" cy="31" r="19" stroke="#86632f" stroke-width="1.600"/><circle cx="33" cy="27" r="7" fill="#86632f"/><path d="M20 43c4-9 22-9 26 0-6 8-20 8-26 0z" fill="#86632f"/>`,
  calendar: svg`${tile("url(#g-paper)")}<path d="M0 20v-6A14 14 0 0 1 14 0h34a14 14 0 0 1 14 14v6z" fill="#fa5450"/><text x="31" y="15.500" text-anchor="middle" font-family="Inter" font-weight="700" font-size="12.500" fill="#fff">SEPT.</text><text x="31" y="53" text-anchor="middle" font-family="Inter" font-weight="300" font-size="38" textLength="36" lengthAdjust="spacingAndGlyphs" fill="#2a2a2a">21</text>`,
  safari: svg`${tile("url(#g-saf)")}<circle cx="31" cy="31" r="27" fill="url(#g-safb)"/><circle cx="31" cy="31" r="24.500" stroke="#d4ecff" stroke-width="3" stroke-dasharray=".8 2.400"/><path d="M50 15L35 35l-7.500-7z" fill="#f04038"/><path d="M13 47l14.500-19L35 35z" fill="#f5f7fa"/>`,
  notes: svg`${tile("url(#g-paper2)")}<path d="M0 16v-2A14 14 0 0 1 14 0h34a14 14 0 0 1 14 14v2z" fill="url(#g-note)"/><path d="M0 19h62" stroke="#9a9a98" stroke-width="1.200" stroke-dasharray="1 1.400"/><path d="M0 32h62M0 47h62" stroke="#cfcdca" stroke-width="1.500"/>`,
  word: svg`${tile("#fff")}<path d="M17 10h34v11H17z" fill="#41a5ee"/><path d="M17 21h34v10H17z" fill="#2b7cd3"/><path d="M17 31h34v10H17z" fill="#185abd"/><path d="M17 41h34v11H17z" fill="#103f91"/><rect x="6" y="19" width="23" height="24" rx="2" fill="#1b5abe"/><text x="17.500" y="37" text-anchor="middle" font-family="Inter" font-weight="700" font-size="16" fill="#fff">W</text>`,
  chrome: svg`${tile("#fdfdfd")}<circle cx="31" cy="31" r="27" fill="#fbbc2f"/><path d="M31 31L7.600 17.500A27 27 0 0 1 54.400 17.500H31z" fill="#e8453c"/><path d="M7.600 17.500A27 27 0 0 0 29 57.900L42.700 37.700 31 31 19.300 37.700z" fill="#34a04f"/><circle cx="31" cy="31" r="13" fill="#fff"/><circle cx="31" cy="31" r="10.300" fill="#4285f4"/>`,
  maps: svg`<clipPath id="mc"><rect width="62" height="62" rx="14"/></clipPath><g clip-path="url(#mc)"><path d="M0 0h62v62H0z" fill="#f3f1ee"/><path d="M34 0h28v40z" fill="#54d169"/><path d="M0 2h14v22z" fill="#54d169"/><path d="M0 30l22 32H0z" fill="#e986c8"/><path d="M38 40l24 22H34z" fill="#fbd02d"/><path d="M62 44L30 8l8-8 24 26z" fill="#54d169"/><path d="M16 0h14v34H16z" fill="#2285f5"/><path d="M46 0c0 12 6 18 16 19" stroke="#dcdcdc" stroke-width="7"/></g><circle cx="23.500" cy="38" r="14.500" fill="#2a7ef2" stroke="#fff" stroke-width="2.500"/><path d="M23.500 29l7 17-7-4-7 4z" fill="#fff"/>`,
  photos: svg`${tile("#fcfcfc")}${petals.map((c, i) => svg`<rect x="23" y="4" width="16" height="26.500" rx="8" fill=${c} fill-opacity=".85" transform=${`rotate(${i * 45} 31 31)`} />`)}`,
  facetime: svg`${tile("url(#g-green)")}<rect x="9" y="18" width="30" height="27" rx="7" fill="url(#g-white)"/><path d="M42 27l10-8v25l-10-8z" fill="url(#g-white)"/>`,
  terminal: svg`${tile("#b9d0d2")}<rect x="1" y="2" width="60" height="59" rx="13" fill="#050505"/><rect x="6.500" y="7" width="49" height="49" rx="8" fill="#262626"/><text x="9" y="22" font-family="DejaVu Sans Mono" font-weight="700" font-size="15" fill="#fff">&gt;_</text>`,
  excel: svg`${tile("#fff")}<path d="M17 10h17v11H17z" fill="#21a366"/><path d="M34 10h18v11H34z" fill="#33c481"/><path d="M17 21h17v10H17z" fill="#107c41"/><path d="M34 21h18v10H34z" fill="#21a366"/><path d="M17 31h35v21H17z" fill="#185c37"/><path d="M34 31h18v10H34z" fill="#107c41"/><rect x="6" y="19" width="23" height="24" rx="2" fill="#107c41"/><text x="17.500" y="37" text-anchor="middle" font-family="Inter" font-weight="700" font-size="16" fill="#fff">X</text>`,
  vscode: svg`${tile("#fff")}<path d="M41 9v13L14 44l-5-4v-3z" fill="#1282cf"/><path d="M9 20l5-4 27 24v13L9 25z" fill="#0d6db5"/><path d="M41 9l11 5v34l-11 5z" fill="#2ba0ec"/>`,
  podcasts: svg`${tile("url(#g-pod)")}<g stroke="#fff" stroke-width="2.600"><path d="M20 47a20.500 20.500 0 1 1 22 0"/><path d="M22.500 39a13 13 0 1 1 17 0"/></g><circle cx="31" cy="28" r="5" fill="#fff"/><path d="M26.500 39c0-5 9-5 9 0l-1.500 13c-.5 4-5.500 4-6 0z" fill="#fff"/>`,
  music: svg`${tile("url(#g-mus)")}<path d="M22 15l23-4.500v30a6 5.500 0 1 1-3.500-5V21L25.500 24v21.500a6 5.500 0 1 1-3.500-5z" fill="#fff"/>`,
  tv: svg`${tile("url(#g-tv)")}<g transform="translate(7.500 19) scale(.86)"><path d=${APPLE} fill="#fff"/></g><text x="28.500" y="41" font-family="Inter" font-weight="500" font-size="27" textLength="26" lengthAdjust="spacingAndGlyphs" fill="#fff">tv</text>`,
  settings: svg`${tile("url(#g-set)")}<circle cx="31" cy="31" r="26" fill="#3d3d3d"/><circle cx="31" cy="31" r="25" stroke="#8a8a8a" stroke-width="3" stroke-dasharray="1.500 1.500"/><circle cx="31" cy="31" r="20" stroke="#9d9d9d" stroke-width="2.500" fill="#4d4d4d"/><circle cx="31" cy="31" r="12.500" stroke="#2e2e2e" stroke-width="2" fill="#7c7c7c"/><path d="M31 31h19M31 31l-9.500-16.500M31 31l-9.500 16.500" stroke="#b5b5b5" stroke-width="3"/><circle cx="31" cy="31" r="4" fill="#2e2e2e" stroke="#b5b5b5" stroke-width="2"/>`,
  arduino: svg`<circle cx="31" cy="32.500" r="35" fill="#12787c"/><circle cx="31" cy="30.500" r="34.500" fill="#1f9ea3"/><path d="M31 31c-5-7-9-9.500-13-9.500a9.500 9.500 0 0 0 0 19c4 0 8-2.500 13-9.500s9-9.500 13-9.500a9.500 9.500 0 0 1 0 19c-4 0-8-2.500-13-9.500z" stroke="#fff" stroke-width="4.600"/><path d="M14 31h8M40 31h8M44 27v8" stroke="#fff" stroke-width="2.600"/>`,
  whatsapp: svg`${tile("url(#g-wa)")}<path d="M9 53l3-11A22.500 22.500 0 1 1 20.500 50z" stroke="#fff" stroke-width="4.500" stroke-linejoin="round"/><g transform="translate(15 15) scale(1.380)"><path d=${PHONE} fill="#fff"/></g>`,
  skype: svg`<circle cx="19" cy="19" r="19" fill="#1b9ae0"/><circle cx="44" cy="44" r="18" fill="#1576c8"/><circle cx="31" cy="31" r="28.500" fill="url(#g-sky)"/><text x="31" y="46" text-anchor="middle" font-family="Inter" font-weight="700" font-size="41" fill="#fff">S</text>`,
  viber: svg`${tile("#7360ec")}<path d="M21 42.500c-7-1.500-10-5-10-17C11 13 16 9.500 31 9.500S51 13 51 25.500 46 43 31 43.500L22.500 52z" stroke="#fff" stroke-width="3" stroke-linejoin="round"/><g transform="translate(17.500 14) scale(1.050)"><path d=${PHONE} fill="#fff"/></g><path d="M32 16c6 0 10.500 4 10.500 10.500M32.500 20.500c3.500.3 5.500 2.300 5.800 5.500" stroke="#fff" stroke-width="1.800" stroke-linecap="round"/>`,
  messages: svg`${tile("url(#g-green)")}<ellipse cx="31" cy="29" rx="22.500" ry="19.500" fill="url(#g-white)"/><path d="M18 43c1 4-1 6-3 8 5 0 9-2 11-5z" fill="#e8f5ea"/>`,
  docker: svg`${tile("#2396ed")}<g transform="translate(10.500 15) scale(1.170)">${whale("#fff")}</g>`,
  trash: svg`<path d="M4 4l6 58c.5 4 41.500 4 42 0l6-58z" fill="url(#g-tr)" fill-opacity=".85"/><ellipse cx="31" cy="5" rx="27" ry="7" fill="#d3d3dc" stroke="#f4f4f8" stroke-width="1.500"/>`,
};

@customElement("mac-dock")
class MacDock extends LitElement {
  static styles = [base, css`
    .dock { width: 2216px; height: 100px; border-radius: 32px; border: 2px solid rgba(255,255,255,.35); padding: 14px 0 0 4px; display: flex;
      background: linear-gradient(90deg, #dac9e7 0%, #d8cbea 20%, #d3c9ea 40%, #c4baef 50%, #c9c0ef 57%, #dccdea 66%, #dfd5e6 80%, #d2cbef 92%, #d9d5ea 100%);
      box-shadow: 0 0 2px rgba(60,40,90,.5); }
    .app { width: 82px; height: 84px; display: flex; flex-direction: column; align-items: center; position: relative; }
    .app svg { filter: drop-shadow(0 1.500px 1px rgba(40,30,60,.3)); }
    .run { width: 8px; height: 8px; border-radius: 50%; background: #584a72; margin-top: 10px; }
    .sep { width: 2px; height: 72px; background: #a39bb5; margin: 0 16px 0 18px; }
    .note { position: absolute; right: 2px; top: -7px; width: 29px; height: 29px; border-radius: 50%; background: #f94a45; color: #fff; font: 16px/29px Inter, sans-serif; text-align: center; }
  `];
  app(name: string, on = false) {
    return html`<div class="app"><svg width="62" height="62" viewBox="0 0 62 62" fill="none">${icons[name]}</svg>
      ${on ? html`<div class="run"></div>` : ""}${name === "settings" ? html`<div class="note">1</div>` : ""}</div>`;
  }
  render() {
    const running = ["finder", "chrome", "terminal", "vscode"];
    const pinned = ["finder", "siri", "launchpad", "contacts", "calendar", "safari", "notes", "word", "chrome", "maps", "photos", "facetime", "terminal", "excel", "vscode", "podcasts", "music", "tv", "settings", "arduino", "whatsapp", "skype", "viber"];
    return html`<svg width="0" height="0"><defs>
        ${grad("g-fw", "#f4f4f6", "#cfd8e4")}${grad("g-fb", "#2ad0fb", "#2272f0")}${grad("g-con", "#b28c52", "#a07038")}${grad("g-paper", "#fff", "#f1f0ee")}
        ${grad("g-paper2", "#fbfbfa", "#e6e4de")}${grad("g-note", "#fed84a", "#fcc42a")}${grad("g-saf", "#fff", "#d4d4d6")}${grad("g-safb", "#2aa8f0", "#2278e8")}
        ${grad("g-green", "#5ef578", "#25c03c")}${grad("g-white", "#ffffff", "#c2e6c8")}${grad("g-pod", "#c763ee", "#7427ae")}${grad("g-mus", "#fb5e74", "#fa2840")}
        ${grad("g-tv", "#27332f", "#0a0c10")}${grad("g-set", "#c8d6da", "#8d8b88")}${grad("g-wa", "#7df07a", "#16d022")}${grad("g-sky", "#22b4f0", "#1470cc")}${grad("g-tr", "#dcdce4", "#f4f4f6")}
        <linearGradient id="g-siri" x1="0" y1=".2" x2="1" y2=".8"><stop offset="0" stop-color="#5a1030"/><stop offset=".5" stop-color="#14202c"/><stop offset="1" stop-color="#0e2c34"/></linearGradient>
        <radialGradient id="g-glow"><stop offset="0" stop-color="#fff"/><stop offset=".3" stop-color="#fff" stop-opacity=".75"/><stop offset="1" stop-color="#fff" stop-opacity="0"/></radialGradient>
      </defs></svg>
      <div class="dock">${pinned.map((n) => this.app(n, running.includes(n)))}
        <div class="sep"></div>${this.app("messages")}${this.app("docker")}<div class="sep"></div>${this.app("trash")}</div>`;
  }
}

/* ------------------------------------------------------------------- desktop */
@customElement("app-root")
class AppRoot extends LitElement {
  static styles = [base, css`
    :host { width: 2560px; height: 1600px; overflow: hidden; position: relative; background: #dcd4ea; }
    .wall { position: absolute; inset: 0; }
    .stack { position: relative; display: flex; flex-direction: column; height: 1600px; }
    .window { height: 1438px; border-radius: 20px; overflow: hidden; background: #fff; position: relative; }
    .cast { margin-top: 2px; border-radius: 20px; box-shadow: 0 0 2px 1px rgba(40,30,60,.55), 0 24px 60px 4px rgba(20,15,40,.42); }
    .haze { position: absolute; left: 140px; right: 110px; bottom: 0; height: 110px;
      background: linear-gradient(rgba(0,0,0,0), rgba(0,0,0,.03) 40%, rgba(0,0,0,.125));
      -webkit-mask-image: linear-gradient(90deg, transparent, #000 130px, #000 calc(100% - 200px), transparent); mask-image: linear-gradient(90deg, transparent, #000 130px, #000 calc(100% - 200px), transparent); }
    .dockrow { margin: 2px 0 0 172px; height: 100px; }
  `];
  render() {
    return html`
      <svg class="wall" width="2560" height="1600" viewBox="0 0 2560 1600">
        <defs>
          <linearGradient id="w0"><stop offset="0" stop-color="#e6d3f2"/><stop offset=".35" stop-color="#dcd8ee"/><stop offset=".6" stop-color="#dcc9e8"/><stop offset=".85" stop-color="#e6d4e6"/><stop offset="1" stop-color="#e9e8fb"/></linearGradient>
          <linearGradient id="w1"><stop offset="0" stop-color="#241a86"/><stop offset=".25" stop-color="#5b50dc"/><stop offset="1" stop-color="#d8c8ec"/></linearGradient>
          <linearGradient id="w2"><stop offset="0" stop-color="#dccae6" stop-opacity="0"/><stop offset="1" stop-color="#3a2ccc"/></linearGradient>
          <linearGradient id="w3"><stop offset="0" stop-color="#e8a8e0"/><stop offset="1" stop-color="#2a20c0"/></linearGradient>
          <linearGradient id="w4"><stop offset="0" stop-color="#3a30d0"/><stop offset="1" stop-color="#d8b8e8"/></linearGradient>
        </defs>
        <rect width="2560" height="1600" fill="url(#w0)"/>
        <rect y="46" width="100" height="6" fill="url(#w3)"/><rect x="728" y="46" width="260" height="6" fill="url(#w4)"/><rect x="1400" y="46" width="234" height="6" fill="url(#w2)"/>
        <path d="M1128 1480h20l60 40h-30zM1378 1586l52 14h250v-14zM1395 1480h20l90 20h-70z" fill="url(#w1)"/>
        <path d="M2100 1480h130l42 120h-172z" fill="url(#w2)"/>
      </svg>
      <div class="stack">
        <mac-menubar></mac-menubar>
        <div class="cast"><div class="window">
          <browser-chrome></browser-chrome>
          <ci-page></ci-page>
          <div class="haze"></div>
        </div></div>
        <div class="dockrow"><mac-dock></mac-dock></div>
      </div>`;
  }
}
